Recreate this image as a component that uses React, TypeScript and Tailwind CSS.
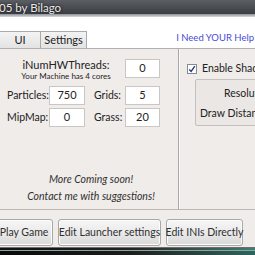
import React from 'react';

const SEGOE = "font-['Lato','Liberation_Sans',sans-serif]";

function NumBox({ value, w }: { value: string; w: string }) {
    return (
        <div className={`${w} h-[19px] shrink-0 bg-white border border-[#c9c6c5] flex items-center justify-center text-[11px] text-[#222]`}>
            {value}
        </div>
    );
}

function Btn({ label, w }: { label: string; w: string }) {
    return (
        <div className={`${w} h-[27px] shrink-0 whitespace-nowrap rounded-[3px] border border-[#a8a8a8] bg-gradient-to-b from-[#f6f6f6] via-[#eaeaea] to-[#d9d9d9] flex items-center justify-center text-[10.5px] text-[#303030] shadow-[inset_0_0_0_1px_#fcfcfc]`}>
            {label}
        </div>
    );
}

export default function App() {
    return (
        <div className={`w-[255px] h-[255px] overflow-hidden flex flex-col bg-white ${SEGOE}`}>
            {/* Title bar */}
            <div className="h-[14px] bg-gradient-to-b from-[#5b5e63] to-[#3b3e43] flex items-center">
                <span className="text-[11.5px] leading-none text-[#e8e8e8] -ml-[1px] pt-[2px] [text-shadow:0_0_3px_#000]">05 by Bilago</span>
            </div>
            <div className="h-[3px] bg-gradient-to-b from-[#8c9096] to-[#d8dadc]" />

            {/* Tabs row */}
            <div className="h-[31px] bg-white flex items-end">
                <div className="flex items-end h-[17px]">
                    <div className="w-[41px] h-[17px] border border-l-0 border-b-0 border-[#a9aaac] bg-gradient-to-b from-[#f3f3f3] to-[#e3e3e3] flex items-center justify-center text-[11px] text-[#222]">UI</div>
                    <div className="w-[46px] h-[17px] border border-l-0 border-b-0 border-[#a9aaac] bg-gradient-to-b from-[#f3f3f3] to-[#e3e3e3] flex items-center justify-center text-[11px] text-[#222]">Settings</div>
                </div>
                <div className="flex-1" />
                <div className="h-[17px] flex items-center text-[9.5px] text-[#4a4ad8] whitespace-nowrap mr-[1px] pb-[3px]">I Need YOUR Help</div>
            </div>

            {/* Content panel */}
            <div className="flex-1 flex flex-col bg-[#f0ecea] border-t border-[#aeb0b3]">
                <div className="h-[160px] flex">
                    {/* Left column */}
                    <div className="w-[178px] flex flex-col pt-[10px]">
                        <div className="flex items-start pl-[7px]">
                            <div className="w-[118px] flex flex-col items-center">
                                <span className="text-[11px] leading-[12px] text-[#222]">iNumHWThreads:</span>
                                <span className="text-[8px] leading-[11px] text-[#222] whitespace-nowrap">Your Machine has 4 cores</span>
                            </div>
                            <NumBox value="0" w="w-[35px]" />
                        </div>
                        <div className="flex items-center pl-[7px] mt-[4px] whitespace-nowrap">
                            <span className="w-[42px] shrink-0 text-[10.5px] text-[#222]">Particles:</span>
                            <NumBox value="750" w="w-[36px]" />
                            <span className="w-[31px] shrink-0 ml-[9px] text-[10.5px] text-[#222]">Grids:</span>
                            <NumBox value="5" w="w-[35px]" />
                        </div>
                        <div className="flex items-center pl-[7px] mt-[3px] whitespace-nowrap">
                            <span className="w-[42px] shrink-0 text-[10.5px] text-[#222]">MipMap:</span>
                            <NumBox value="0" w="w-[36px]" />
                            <span className="w-[31px] shrink-0 ml-[9px] text-[10.5px] text-[#222]">Grass:</span>
                            <NumBox value="20" w="w-[35px]" />
                        </div>
                        <div className="mt-[44px] flex flex-col items-center text-[10.5px] italic text-[#303030] leading-[16px] gap-[1px] pl-[4px] whitespace-nowrap">
                            <span>More Coming soon!</span>
                            <span>Contact me with suggestions!</span>
                        </div>
                    </div>

                    {/* Separator */}
                    <div className="w-[1px] bg-[#a9a7a6]" />
                    <div className="w-[1px] bg-[#fbfafa]" />

                    {/* Right column */}
                    <div className="flex-1 flex flex-col pt-[12px] pl-[7px] overflow-hidden">
                        <div className="flex items-center gap-[5px] whitespace-nowrap">
                            <div className="w-[10px] h-[10px] shrink-0 border border-[#8a8a8a] bg-white flex items-center justify-center">
                                <svg viewBox="0 0 10 10" className="w-[8px] h-[8px]">
                                    <path d="M1.5 5.5 L4 8 L8.5 1.5" fill="none" stroke="#243b8c" strokeWidth="1.8" />
                                </svg>
                            </div>
                            <span className="text-[10.5px] text-[#222]">Enable Shadows</span>
                        </div>
                        <div className="ml-[8px] mt-[2px] w-[90px] h-[47px] shrink-0 border border-[#c4c0bf] rounded-l-[2px] bg-[#ebe7e5] flex flex-col whitespace-nowrap text-[10.5px] text-[#222] pt-[6px]">
                            <span className="pl-[28px] leading-[14px]">Resolution</span>
                            <span className="pl-[4px] mt-[6px] leading-[14px]">Draw Distance</span>
                        </div>
                    </div>
                </div>
                <div className="h-[1px] bg-[#b9b6b5]" />

                {/* Buttons */}
                <div className="flex-1 flex items-start gap-[5px] pt-[9px] -ml-[5px]">
                    <Btn label="Play Game" w="w-[58px]" />
                    <Btn label="Edit Launcher settings" w="w-[103px]" />
                    <Btn label="Edit INIs Directly" w="w-[77px]" />
                </div>
            </div>

            {/* Taskbar strip */}
            <div className="h-[8px] flex flex-col">
                <div className="h-[1px] bg-[#6d6d6d]" />
                <div className="h-[2px] bg-gradient-to-r from-[#111] via-[#222] to-[#3e7f74]" />
                <div className="h-[1px] bg-[#8aa6a1]" />
                <div className="flex-1 bg-gradient-to-r from-[#0a0a0a] via-[#1c1c1c] to-[#2e665d]" />
            </div>
        </div>
    );
}
